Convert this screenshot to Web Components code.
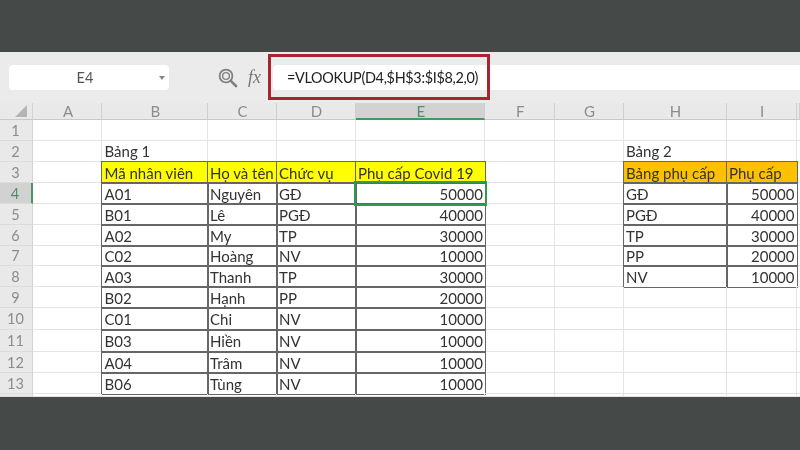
<!DOCTYPE html>
<html lang="vi"><head><meta charset="utf-8"><title>VLOOKUP</title>
<style>
html,body{margin:0;padding:0;width:800px;height:450px;overflow:hidden;background:#454a48}
</style></head>
<body>
<x-app></x-app>
<script>
class XApp extends HTMLElement{constructor(){super();this.attachShadow({mode:'open'}).innerHTML=`
<style>:host{display:flex;flex-direction:column;width:800px;height:450px;background:#454a48;font-family:Lato,"Liberation Sans",sans-serif;}
.dark{height:52px;flex:none;background:#454a48}.win{height:345px;flex:none;display:flex;flex-direction:column;background:#fff;overflow:hidden;filter:blur(.5px)}
.end{flex:1;background:#454a48}</style>
<div class="dark"></div><div class="win"><x-formula-bar></x-formula-bar><x-sheet></x-sheet></div><div class="end"></div>`}}
class XFormulaBar extends HTMLElement{constructor(){super();this.attachShadow({mode:'open'}).innerHTML=`
<style>:host{display:flex;align-items:flex-start;height:51px;flex:none;background:#ebebeb;padding:13px 0 0 9px;box-sizing:border-box;position:relative}
.name{width:160px;height:25px;background:#fff;border-radius:4px;display:flex;align-items:center;justify-content:center;position:relative;font-size:14.5px;color:#555;box-sizing:border-box;padding-right:8px}
.name svg{position:absolute;right:4px;top:11px}
.tools{width:104px;height:25px;display:flex;align-items:center;flex:none}
.mag{margin-left:49px}
.fx{font:italic 18px "Liberation Serif",serif;color:#777;margin-left:10px}
.f{flex:1;height:25px;background:#fff;border-radius:4px 0 0 4px;display:flex;align-items:center;padding-left:14px;font-size:14.4px;letter-spacing:-.3px;color:#222;white-space:nowrap}
.red{position:absolute;left:268px;top:2px;width:222px;height:46px;border:3px solid #a8242e;box-sizing:border-box;pointer-events:none}
</style>
<div class="name"><span>E4</span><svg width="6" height="4" viewBox="0 0 6 4"><path d="M0 0h6L3 4z" fill="#888"/></svg></div>
<div class="tools"><svg class="mag" width="20" height="20" viewBox="0 0 20 20" fill="none" stroke="#808080"><circle cx="8" cy="8" r="6.4" stroke-width="1.8"/><circle cx="8" cy="8" r="3.4" stroke-width="1.4"/><path d="M12.8 12.8L18 18" stroke-width="2.6" stroke-linecap="round"/></svg><span class="fx">fx</span></div>
<div class="f">=VLOOKUP(D4,$H$3:$I$8,2,0)</div>
<div class="red"></div>`}}
class XSheet extends HTMLElement{constructor(){super();
const cols=['A','B','C','D','E','F','G','H','I',''];
const T1=[['Mã nhân viên','Họ và tên','Chức vụ','Phụ cấp Covid 19'],['A01','Nguyên','GĐ',50000],['B01','Lê','PGĐ',40000],['A02','My','TP',30000],['C02','Hoàng','NV',10000],['A03','Thanh','TP',30000],['B02','Hạnh','PP',20000],['C01','Chi','NV',10000],['B03','Hiền','NV',10000],['A04','Trâm','NV',10000],['B06','Tùng','NV',10000]];
const T2=[['Bảng phụ cấp','Phụ cấp'],['GĐ',50000],['PGĐ',40000],['TP',30000],['PP',20000],['NV',10000]];
let h='<div class="corner"><svg width="12" height="12" viewBox="0 0 12 12"><path d="M12 0V12H0z" fill="#b5b5b5"/></svg></div>';
cols.forEach(c=>{h+=`<div class="ch${c==='E'?' sel':''}">${c}</div>`});
for(let r=1;r<=14;r++){
 h+=`<div class="rh${r===4?' sel':''}">${r<14?r:''}</div>`;
 for(let c=0;c<10;c++){
  let t='',k='cell';
  if(r===2&&c===1)t='Bảng 1';
  if(r===2&&c===7)t='Bảng 2';
  if(r>=3&&r<=13&&c>=1&&c<=4){const v=T1[r-3][c-1];t=v;k+=' t';if(r===3)k+=' y';if(typeof v==='number')k+=' n';if(r===4&&c===4)k+=' cur';}
  if(r>=3&&r<=8&&c>=7&&c<=8){const v=T2[r-3][c-7];t=v;k+=' t';if(r===3)k+=' o';if(typeof v==='number')k+=' n';}
  h+=`<div class="${k}">${t}</div>`;
 }
}
this.attachShadow({mode:'open'}).innerHTML=`
<style>:host{display:grid;flex:1;min-height:0;overflow:hidden;
grid-template-columns:33px 69px 105.5px 69px 79px 129.5px 69.5px 69px 103px 70px 3px;
grid-template-rows:17px 21px 21px 21px 21px 21px 21px 20px 21px 21px 22px 22px 21px 21px 3px;
font-size:15px;color:#333;background:#fff}
.corner,.ch,.rh{background:#e9e9e9;color:#8c8c8c;display:flex;align-items:center;justify-content:center;box-sizing:border-box}
.corner{justify-content:flex-end;padding-right:5px;border-bottom:1px solid #c8c8c8;border-right:1px solid #d4d4d4}
.ch{border-right:1px solid #cfcfcf;border-bottom:1px solid #c8c8c8;font-size:15px;padding-left:2px}
.ch.sel{background:#d2d2d2;color:#4d8f63;border-bottom:2px solid #3f9a5c}
.rh{border-right:1px solid #d4d4d4;border-bottom:1px solid #dcdcdc;font-size:14.5px;padding-right:1px}
.rh.sel{background:#d2d2d2;color:#4d8f63;border-right:2px solid #3f9a5c}
.cell{display:flex;align-items:center;box-sizing:border-box;padding:0 2px 0 2.5px;border-right:1px solid #e3e3e3;border-bottom:1px solid #e3e3e3;white-space:nowrap;overflow:visible;min-width:0}
.t{border:0;outline:1px solid #666}
.y{background:#ffff00}.o{background:#ffc000}
.n{justify-content:flex-end}
.cur{outline:2px solid #2f9a52;position:relative;z-index:1}
</style>${h}`}}
customElements.define('x-app',XApp);customElements.define('x-formula-bar',XFormulaBar);customElements.define('x-sheet',XSheet);
</script>
</body></html>
